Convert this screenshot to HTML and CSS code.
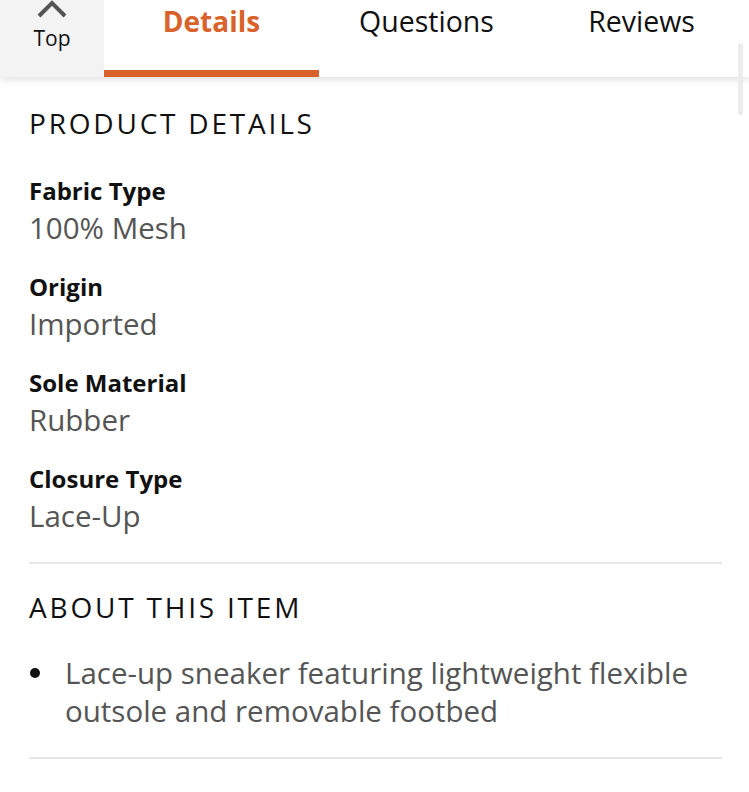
FILE: index.html
```html
<!DOCTYPE html>
<html lang="en">
<head>
    <meta charset="UTF-8">
    <title>Product details</title>
    <link rel="stylesheet" href="styles.css">
</head>
<body>

<div class="tabBar">
    <div class="topButton">
        <svg class="chevron" width="30" height="20" viewBox="0 0 30 20">
            <path d="M2 16 L15 3 L28 16" fill="none" stroke="#555" stroke-width="4"/>
        </svg>
        <span>Top</span>
    </div>
    <div class="tab active">Details</div>
    <div class="tab">Questions</div>
    <div class="tab">Reviews</div>
</div>
<div class="scrollThumb"></div>

<div class="content">
    <div class="section">
        <h2 class="sectionTitle">PRODUCT DETAILS</h2>
        <div class="detail">
            <div class="detailName">Fabric Type</div>
            <div class="detailValue">100% Mesh</div>
        </div>
        <div class="detail">
            <div class="detailName">Origin</div>
            <div class="detailValue">Imported</div>
        </div>
        <div class="detail">
            <div class="detailName">Sole Material</div>
            <div class="detailValue">Rubber</div>
        </div>
        <div class="detail">
            <div class="detailName">Closure Type</div>
            <div class="detailValue">Lace-Up</div>
        </div>
    </div>
    <div class="section">
        <h2 class="sectionTitle about">ABOUT THIS ITEM</h2>
        <ul class="bullets">
            <li>Lace-up sneaker featuring lightweight flexible outsole and removable footbed</li>
        </ul>
    </div>
</div>

</body>
</html>
```
FILE: styles.css
```css
body {
    margin: 0;
    background: #fff;
    font-family: "Open Sans", "Noto Sans", sans-serif;
    color: #111;
    overflow: hidden;
}

.tabBar {
    display: flex;
    height: 77px;
    background: #fff;
    box-shadow: 0 2px 8px rgba(0, 0, 0, 0.14);
    position: relative;
    z-index: 1;
}

.topButton {
    width: 104px;
    background: #f3f3f3;
    display: flex;
    flex-direction: column;
    align-items: center;
}

.chevron {
    display: block;
}

.topButton span {
    font-size: 21px;
    line-height: 28px;
    color: #111;
    margin-top: 4px;
}

.tab {
    flex: 1;
    text-align: center;
    font-size: 28.5px;
    line-height: 42px;
    color: #111;
    box-sizing: border-box;
}

.tab.active {
    color: #d9622b;
    font-size: 28px;
    font-weight: 700;
    border-bottom: 7px solid #d9622b;
}

.scrollThumb {
    position: absolute;
    top: 43px;
    right: 6px;
    width: 5px;
    height: 72px;
    background: #ececec;
    border-radius: 3px;
    z-index: 2;
}

.content {
    padding: 0 27px 0 29px;
}

.section {
    border-bottom: 2px solid #e7e7e7;
    padding-bottom: 5px;
}

.sectionTitle {
    margin: 0;
    font-weight: 400;
    font-size: 28px;
    letter-spacing: 2.8px;
    line-height: 36px;
    padding: 28px 0 32px;
}

.sectionTitle.about {
    padding: 25px 0 29px;
}

.detail {
    padding-bottom: 22px;
}

.detailName {
    font-weight: 700;
    font-size: 24px;
    line-height: 36px;
}

.detailValue {
    font-size: 29.5px;
    line-height: 38px;
    color: #555;
}

.bullets {
    margin: 0;
    padding: 0 0 22px 0;
    list-style: none;
    font-size: 29.5px;
    line-height: 38px;
    color: #555;
}

.bullets li {
    display: flex;
    align-items: flex-start;
}

.bullets li::before {
    content: "";
    flex: none;
    width: 10px;
    height: 10px;
    border-radius: 50%;
    background: #111;
    margin: 14px 25px 0 1px;
}
```
